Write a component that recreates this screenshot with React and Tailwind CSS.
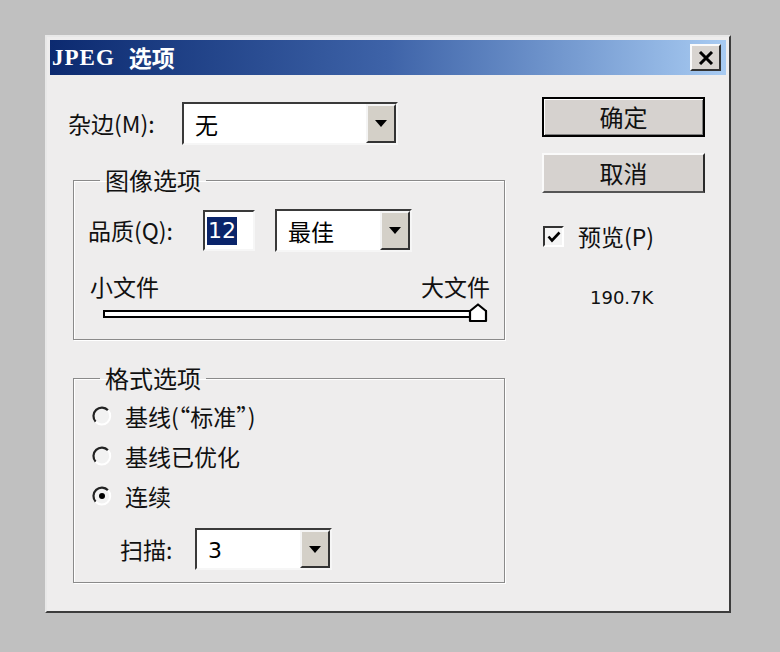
import React from "react"

const cjk = "font-['Noto_Sans_CJK_SC','Noto_Sans',sans-serif]"

function Arrow() {
  return (
    <svg width="12" height="7" viewBox="0 0 12 7">
      <path d="M0 0 H12 L6 7 Z" fill="#000" />
    </svg>
  )
}

function Select({ className, value })
{
  return (
    <div className={"flex bg-white border-2 border-t-[#3a3a3a] border-l-[#3a3a3a] border-b-[#f6f6f6] border-r-[#f6f6f6] " + className}>
      <div className="flex-1 flex items-center pl-[11px] pt-[2px] text-[23px] leading-[23px] text-black">{value}</div>
      <div className="w-[30px] flex items-center justify-center bg-[#d4d0c8] border-2 border-t-[#f4f4f4] border-l-[#f4f4f4] border-r-[#333] border-b-[#333]">
        <Arrow />
      </div>
    </div>
  )
}

function Radio({ checked })
{
  return (
    <svg width="20" height="20" viewBox="0 0 20 20">
      <circle cx="10" cy="10" r="8" fill="#f2f2f2" />
      <path d="M16 4.3 A8 8 0 0 0 3.7 15.7" fill="none" stroke="#222" strokeWidth="2.2" />
      <path d="M3.7 15.7 A8 8 0 0 0 16 4.3" fill="none" stroke="#fff" strokeWidth="2" />
      {checked && <circle cx="10" cy="10" r="3" fill="#000" />}
    </svg>
  )
}

function GroupBox({ title, className, children })
{
  return (
    <fieldset className={"border border-[#8a8a8a] shadow-[inset_1px_1px_0_#fff,1px_1px_0_#fff] " + className}>
      <legend className={"ml-[26px] px-[5px] text-[24px] leading-[22px] text-[#111] " + cjk}>{title}</legend>
      {children}
    </fieldset>
  )
}

export default function App()
{
  return (
    <div className={"w-[780px] h-[652px] bg-[#c0c0c0] pt-[35px] pl-[45px] " + cjk}>
      <div className="w-[686px] h-[578px] bg-[#eeeded] border-2 border-t-[#e8e8e8] border-l-[#e8e8e8] border-r-[#3c3c3c] border-b-[#3c3c3c] p-[3px]">

        {/* title bar */}
        <div className="h-[35px] flex items-center justify-between pl-[2px] pr-[5px] bg-linear-to-r from-[#0c2a70] via-[#3e63a8] to-[#a8cbf2]">
          <div className="flex items-center text-white text-[23px] leading-[23px] font-bold">
            <span className="font-['Liberation_Serif',serif] tracking-[1px]">JPEG</span>
            <span className="ml-[14px]">选项</span>
          </div>
          <div className="w-[31px] h-[27px] flex items-center justify-center bg-[#d8d4d0] border-2 border-t-[#fafafa] border-l-[#fafafa] border-r-[#333] border-b-[#333]">
            <svg width="16" height="14" viewBox="0 0 16 14">
              <path d="M2 1 L14 13 M14 1 L2 13" stroke="#000" strokeWidth="3" />
            </svg>
          </div>
        </div>

        {/* body */}
        <div className="flex pt-[22px] pl-[18px]">

          <div className="w-[437px] flex flex-col">
            <div className="flex items-center mt-[5px]">
              <div className="w-[114px] text-[23px] leading-[23px] text-[#111]">杂边(M):</div>
              <Select className="w-[216px] h-[43px]" value="无" />
            </div>

            <GroupBox title="图像选项" className="ml-[5px] mt-[24px] w-[432px] h-[171px]">
              <div className="flex items-center mt-[18px] pl-[14px]">
                <div className="w-[115px] text-[23px] leading-[23px] text-[#111]">品质(Q):</div>
                <div className="w-[52px] h-[41px] flex items-center bg-white border-2 border-t-[#3a3a3a] border-l-[#3a3a3a] border-b-[#f6f6f6] border-r-[#f6f6f6] pl-[2px]">
                  <span className="bg-[#0a246a] text-white text-[22px] leading-[28px] font-['DejaVu_Sans',sans-serif] px-[1px]">12</span>
                </div>
                <Select className="ml-[20px] w-[137px] h-[43px]" value="最佳" />
              </div>

              <div className="flex justify-between mt-[23px] pl-[16px] pr-[14px] text-[23px] leading-[23px] text-[#111]">
                <span>小文件</span>
                <span>大文件</span>
              </div>

              <div className="relative ml-[29px] mt-[12px] w-[384px] h-[8px] bg-white border-2 border-black">
                <svg className="absolute right-[-3px] top-[-9px]" width="20" height="20" viewBox="0 0 20 20">
                  <path d="M2 8 L10 1.5 L18 8 V18 H2 Z" fill="#fff" stroke="#000" strokeWidth="2.2" strokeLinejoin="round" />
                </svg>
              </div>
            </GroupBox>

            <GroupBox title="格式选项" className="ml-[5px] mt-[27px] w-[432px] h-[216px]">
              <div className="flex flex-col pt-[7px] pl-[18px] text-[23px] leading-[23px] text-[#111]">
                <div className="h-[40px] flex items-center">
                  <Radio />
                  <span className="ml-[13px]">基线(“标准”)</span>
                </div>
                <div className="h-[40px] flex items-center">
                  <Radio />
                  <span className="ml-[13px]">基线已优化</span>
                </div>
                <div className="h-[40px] flex items-center">
                  <Radio checked />
                  <span className="ml-[13px]">连续</span>
                </div>
              </div>
              <div className="flex items-center mt-[12px] pl-[46px]">
                <div className="w-[75px] text-[23px] leading-[23px] text-[#111]">扫描:</div>
                <Select className="w-[137px] h-[42px]" value={<span className="font-['DejaVu_Sans',sans-serif] text-[22px]">3</span>} />
              </div>
            </GroupBox>
          </div>

          <div className="ml-[37px] w-[163px] flex flex-col">
            <button className="h-[40px] bg-[#d6d2cf] border-2 border-black shadow-[inset_1px_1px_0_#fff,inset_-1px_-1px_0_#808080] text-[24px] leading-[24px] text-[#111]">确定</button>
            <button className="mt-[16px] h-[40px] bg-[#d6d2cf] border-2 border-t-[#fafafa] border-l-[#fafafa] border-r-[#2a2a2a] border-b-[#555] text-[24px] leading-[24px] text-[#111]">取消</button>

            <div className="flex items-center mt-[32px] ml-[1px]">
              <div className="w-[21px] h-[21px] flex items-center justify-center bg-[#f4f4f4] border-2 border-t-[#333] border-l-[#333] border-b-[#fff] border-r-[#fff]">
                <svg width="14" height="12" viewBox="0 0 14 12">
                  <path d="M1.5 5.5 L5 9.5 L12.5 1.5" fill="none" stroke="#000" strokeWidth="2.6" />
                </svg>
              </div>
              <span className="ml-[14px] text-[23px] leading-[23px] text-[#111]">预览(P)</span>
            </div>

            <div className="mt-[40px] ml-[48px] text-[18px] leading-[20px] text-[#111] font-['DejaVu_Sans',sans-serif]">190.7K</div>
          </div>

        </div>
      </div>
    </div>
  )
}
